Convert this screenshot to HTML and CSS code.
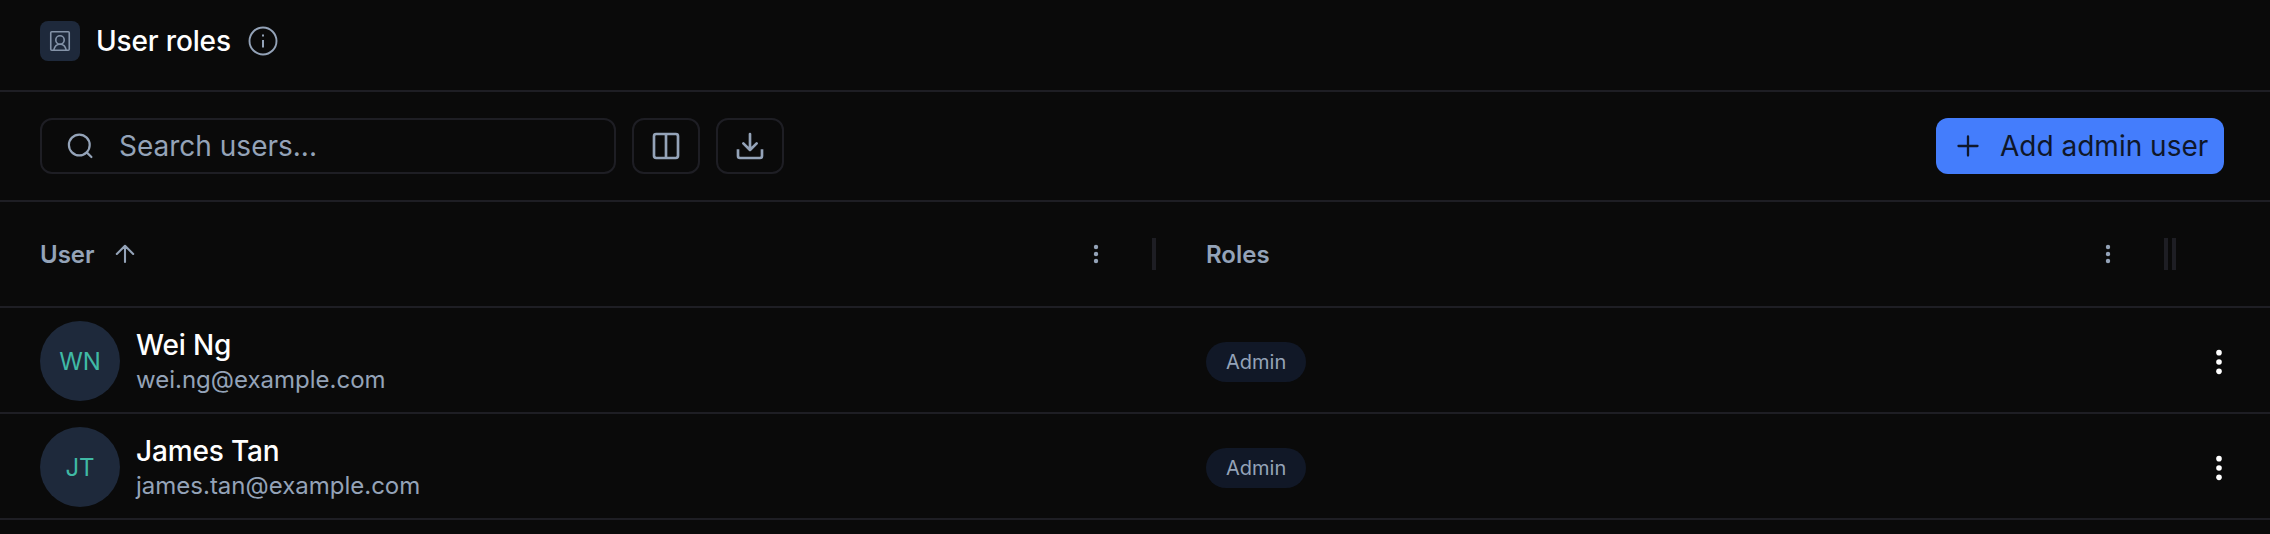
FILE: index.html
```
<!DOCTYPE html>
<html lang="en">
<head>
<meta charset="utf-8">
<title>User roles</title>
<link rel="stylesheet" href="styles.css">
</head>
<body>
<header class="page-header">
  <span class="badge-icon">
    <svg width="24" height="24" viewBox="0 0 24 24" fill="none" stroke="currentColor" stroke-width="1.600" stroke-linejoin="round"><rect x="2.750" y="2.750" width="18.500" height="18.500" rx="1"/><circle cx="12" cy="11" r="4.200"/><path d="M5.800 21c.8-3.800 2.800-5.800 6.200-5.800s5.400 2 6.200 5.800"/></svg>
  </span>
  <h1 class="page-title">User roles</h1>
  <svg class="info" width="30" height="30" viewBox="0 0 30 30" fill="none" stroke="currentColor"><circle cx="15" cy="15" r="13.500" stroke-width="1.900"/><path d="M15 14v7.500M15 8.500v2" stroke-width="2"/></svg>
</header>
<section class="toolbar">
  <div class="search">
    <svg width="28" height="28" viewBox="0 0 28 28" fill="none" stroke="currentColor" stroke-width="2.200" stroke-linecap="round"><circle cx="13.300" cy="13" r="10.400"/><path d="M20.700 20.400l4.700 4.600"/></svg>
    <span class="placeholder">Search users...</span>
  </div>
  <button class="tool"><svg width="32" height="32" viewBox="0 0 24 24" fill="none" stroke="currentColor" stroke-width="2" stroke-linejoin="round"><rect x="3" y="3" width="18" height="18" rx="1.600"/><path d="M12 3v18"/></svg></button>
  <button class="tool"><svg width="32" height="32" viewBox="0 0 24 24" fill="none" stroke="currentColor" stroke-width="2"><path d="M3 14.500V19.500a1.500 1.500 0 0 0 1.500 1.500h15a1.500 1.500 0 0 0 1.500-1.500v-5"/><path d="M12 3v12M7 10l5 5 5-5" stroke-linecap="round" stroke-linejoin="round"/></svg></button>
  <button class="add"><svg width="24" height="24" viewBox="0 0 24 24" fill="none" stroke="currentColor" stroke-width="2.300" stroke-linecap="round"><path d="M12 2.500v19M2.500 12h19"/></svg><span>Add admin user</span></button>
</section>
<main class="table">
  <div class="row head">
    <div class="cell head-cell">
      <span>User</span>
      <svg class="sort" width="20" height="20" viewBox="0 0 20 20" fill="none" stroke="currentColor" stroke-width="2.100" stroke-linejoin="round" stroke-linecap="round"><path d="M10 18V2M1.800 10L10 1.800l8.200 8.200"/></svg>
      <svg class="menu" width="24" height="24" viewBox="0 0 24 24" fill="currentColor"><circle cx="12" cy="5" r="2.200"/><circle cx="12" cy="12" r="2.200"/><circle cx="12" cy="19" r="2.200"/></svg>
      <i class="handle"></i>
    </div>
    <div class="cell head-cell">
      <span>Roles</span>
      <svg class="menu" width="24" height="24" viewBox="0 0 24 24" fill="currentColor"><circle cx="12" cy="5" r="2.200"/><circle cx="12" cy="12" r="2.200"/><circle cx="12" cy="19" r="2.200"/></svg>
      <i class="handle"></i>
    </div>
    <div class="cell head-cell last"><i class="handle"></i></div>
  </div>
  <div class="row">
    <div class="cell user">
      <span class="avatar">WN</span>
      <div class="who"><span class="name">Wei Ng</span><span class="email">wei.ng@example.com</span></div>
    </div>
    <div class="cell"><span class="pill">Admin</span></div>
    <div class="cell actions"><svg width="32" height="32" viewBox="0 0 24 24" fill="currentColor"><circle cx="12" cy="5" r="2.100"/><circle cx="12" cy="12" r="2.100"/><circle cx="12" cy="19" r="2.100"/></svg></div>
  </div>
  <div class="row">
    <div class="cell user">
      <span class="avatar">JT</span>
      <div class="who"><span class="name">James Tan</span><span class="email">james.tan@example.com</span></div>
    </div>
    <div class="cell"><span class="pill">Admin</span></div>
    <div class="cell actions"><svg width="32" height="32" viewBox="0 0 24 24" fill="currentColor"><circle cx="12" cy="5" r="2.100"/><circle cx="12" cy="12" r="2.100"/><circle cx="12" cy="19" r="2.100"/></svg></div>
  </div>
</main>
</body>
</html>
```

FILE: styles.css
```
* { box-sizing: border-box; }
body {
  margin: 0;
  height: 534px;
  overflow: hidden;
  background: #0a0a0a;
  color: #fff;
  font-family: Inter, sans-serif;
  font-size: 28px;
}
.page-header {
  display: flex;
  align-items: center;
  height: 92px;
  padding: 0 40px 8px;
  border-bottom: 2px solid #1e1e24;
}
.badge-icon {
  display: flex;
  align-items: center;
  justify-content: center;
  width: 40px;
  height: 40px;
  border-radius: 8px;
  background: #1e293b;
  color: #8493a8;
}
.page-title {
  margin: 0 17px 0 16px;
  font-size: 28px;
  font-weight: 500;
  letter-spacing: -0.15px;
  line-height: 40px;
}
.info { color: #94a3b8; }
.toolbar {
  display: flex;
  align-items: center;
  gap: 16px;
  height: 110px;
  padding: 0 46px 0 40px;
  border-bottom: 2px solid #1e1e24;
}
.search {
  display: flex;
  align-items: center;
  gap: 25px;
  width: 576px;
  height: 56px;
  padding: 0 24px;
  border: 2px solid #1e1e24;
  border-radius: 12px;
  color: #94a3b8;
}
.tool {
  display: flex;
  align-items: center;
  justify-content: center;
  width: 68px;
  height: 56px;
  padding: 0;
  border: 2px solid #1e1e24;
  border-radius: 12px;
  background: transparent;
  color: #94a3b8;
}
.add {
  display: flex;
  align-items: center;
  gap: 20px;
  width: 288px;
  height: 56px;
  margin-left: auto;
  padding: 0 0 0 20px;
  border: 0;
  border-radius: 12px;
  background: #447dfc;
  color: #0f172a;
  font: inherit;
  white-space: nowrap;
}
.row {
  display: grid;
  grid-template-columns: 1166px 1012px 1fr;
  height: 106px;
  border-bottom: 2px solid #1e1e24;
}
.cell {
  display: flex;
  align-items: center;
  padding: 4px 0 0 40px;
}
.user { padding-top: 2px; }
.head-cell {
  padding: 0 10px 0 40px;
  color: #94a3b8;
  font-size: 24px;
  font-weight: 600;
}
.head-cell.last { padding: 0; margin-left: -6px; }
.sort { margin-left: 20px; }
.menu { margin-left: auto; margin-right: 44px; }
.handle {
  width: 4px;
  height: 32px;
  background: #1e1e24;
}
.avatar {
  display: flex;
  align-items: center;
  justify-content: center;
  width: 80px;
  height: 80px;
  border-radius: 50%;
  background: #1e293b;
  color: #40b9a5;
  font-size: 24px;
}
.who {
  display: flex;
  flex-direction: column;
  margin-left: 16px;
}
.name {
  font-weight: 500;
  letter-spacing: -0.15px;
  line-height: 38px;
}
.email {
  color: #94a3b8;
  font-size: 24px;
  line-height: 32px;
}
.pill {
  height: 40px;
  padding: 0 20px;
  border-radius: 20px;
  background: #111827;
  color: #94a3b8;
  font-size: 20px;
  line-height: 40px;
}
.actions { padding-left: 25px; }
```
